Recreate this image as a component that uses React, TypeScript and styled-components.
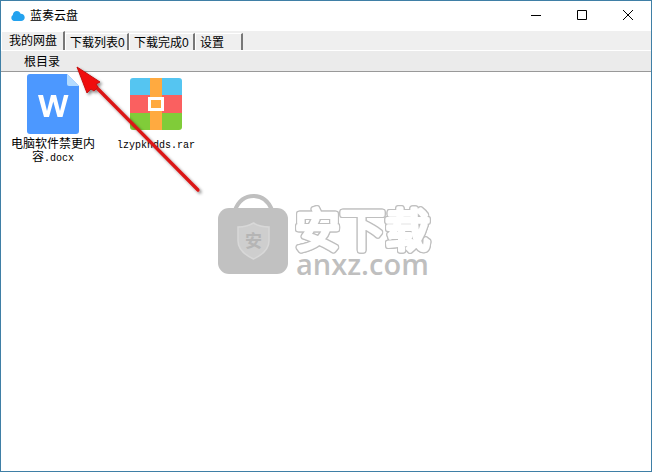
import React from 'react';
import styled, { createGlobalStyle } from 'styled-components';

const GlobalStyle = createGlobalStyle`
  *, *::before, *::after { box-sizing: border-box; }
  body {
    margin: 0;
    background: #fff;
    color: #000;
    font-family: "Liberation Sans", "Noto Sans CJK SC", sans-serif;
    font-size: 12px;
  }
  button {
    margin: 0;
    padding: 0;
    border: 0;
    background: none;
    color: inherit;
    font: inherit;
  }
`;

const Window = styled.div`
  display: flex;
  flex-direction: column;
  min-height: 100vh;
  border: 1px solid #3f7fa6;
  background: #fff;
`;

const TitleBar = styled.header`
  display: flex;
  align-items: center;
  height: 30px;
  padding-left: 9px;
  gap: 5px;
`;

const Title = styled.h1`
  flex: 1;
  margin: 0;
  font-size: 12px;
  font-weight: 400;
  line-height: 16px;
`;

const WindowButtons = styled.div`
  display: flex;
  align-self: stretch;
`;

const WindowButton = styled.button`
  display: grid;
  place-items: center;
  width: 46px;
  padding-bottom: 2px;
`;

const TabBar = styled.nav`
  display: flex;
  height: 20px;
  background: #efefef;
  border-bottom: 1px solid #fff;
`;

const Tab = styled.button<{ $active?: boolean; $width: number }>`
  width: ${(p) => p.$width}px;
  height: ${(p) => (p.$active ? 19 : 17)}px;
  align-self: flex-end;
  padding: 0 0 0 ${(p) => (p.$active ? 7 : 4)}px;
  border-top: 1px solid #fff;
  border-left: 1px solid #fff;
  border-right: 2px solid #777;
  background: #efefef;
  line-height: ${(p) => (p.$active ? 16 : 18)}px;
  text-align: left;
  white-space: nowrap;
`;

const PathBar = styled.div`
  display: flex;
  align-items: flex-end;
  height: 21px;
  padding: 0 0 1px 23px;
  background: #ebebeb;
  border-bottom: 1px solid #999;
  line-height: 16px;
`;

const Files = styled.main`
  position: relative;
  flex: 1;
  display: flex;
  align-items: flex-start;
  gap: 13px;
  padding: 2px 7px;
`;

const File = styled.button`
  display: flex;
  flex-direction: column;
  align-items: center;
  width: 90px;
  gap: 4px;
`;

const FileIcon = styled.span`
  display: grid;
  place-items: center;
  height: 60px;
`;

const FileName = styled.span`
  line-height: 13px;
  text-align: center;
  word-break: break-all;
`;

const Latin = styled.span`
  font-family: "Liberation Mono", monospace;
  font-size: 10px;
`;

const Arrow = styled.svg`
  position: absolute;
  left: 70px;
  top: -10px;
  pointer-events: none;
`;

const Watermark = styled.div`
  position: absolute;
  left: 216px;
  top: 122px;
  display: flex;
  gap: 2px;
  color: #bfbfbf;
  pointer-events: none;
`;

const Brand = styled.div`
  display: flex;
  flex-direction: column;
  padding-top: 6px;
`;

const BrandName = styled.svg`
  overflow: visible;
  filter: drop-shadow(1px 0 #bfbfbf) drop-shadow(-1px 0 #bfbfbf) drop-shadow(0 1px #bfbfbf) drop-shadow(0 -1px #bfbfbf);
`;

const BrandSite = styled.span`
  padding-left: 5px;
  font-family: "Open Sans", sans-serif;
  font-size: 29px;
  font-weight: 600;
  line-height: 20px;
`;

const CloudIcon = () => (
  <svg width="15" height="11" viewBox="0 0 15 11" aria-hidden="true">
    <path
      d="M3.7 10A3.4 3.4 0 0 1 2.800 3.900C3.100 1.500 4.800 0 6.800 0c1.900 0 3.300 1.100 3.800 2.800 2.400-.1 4.100 1.500 4.100 3.600s-1.600 3.600-3.600 3.600z"
      fill="#23a2ef"
    />
  </svg>
);

const DocIcon = () => (
  <svg width="52" height="60" viewBox="0 0 52 60" aria-hidden="true">
    <path d="M3 0h37l12 12v45a3 3 0 0 1-3 3H3a3 3 0 0 1-3-3V3a3 3 0 0 1 3-3z" fill="#4c98ff" />
    <path d="M40 0l12 12H42a2 2 0 0 1-2-2z" fill="#b5dcff" />
    <path
      d="M11 21h5l4 16 4-16h5l4 16 4-16h4.500l-6 22h-5l-4.200-15.500L22 43h-5z"
      fill="#fff"
    />
  </svg>
);

const ArchiveIcon = () => (
  <svg width="52" height="52" viewBox="0 0 52 52" aria-hidden="true">
    <path d="M0 17V3a3 3 0 0 1 3-3h46a3 3 0 0 1 3 3v14z" fill="#55c5f1" />
    <path d="M0 17h52v18H0z" fill="#fa6060" />
    <path d="M0 35h52v14a3 3 0 0 1-3 3H3a3 3 0 0 1-3-3z" fill="#80cc39" />
    <path d="M20 0h12v52H20z" fill="#ffaa40" />
    <path d="M19.500 20.500h13v11h-13z" fill="#ffaa40" stroke="#fff" strokeWidth="3" />
  </svg>
);

const BagLogo = () => (
  <svg width="72" height="82" viewBox="0 0 72 82" aria-hidden="true">
    <path d="M18 16C22 6 28 2 36.500 2S51 6 55 16" fill="none" stroke="#bfbfbf" strokeWidth="4" />
    <rect x="1" y="14" width="70" height="66" rx="11" fill="#c1c1c1" />
    <path
      d="M36.500 29c5 3 10 4 15.500 4v14c0 9-7 14-15.500 18C28 61 21 56 21 47V33c5.500 0 10.500-1 15.500-4z"
      fill="#cecece"
      stroke="#d8d8d8"
      strokeWidth="1.500"
    />
    <text x="36.500" y="53" textAnchor="middle" fontSize="17" fontWeight="700" fontFamily="Noto Sans CJK SC, sans-serif" fill="#b5b5b5">
      安
    </text>
  </svg>
);

const glyphs = {
  minimize: 'M1 6.500h10',
  maximize: 'M1.500 1.500h9v9h-9z',
  close: 'M1 1l10 10M11 1L1 11',
};

const Glyph = ({ d }: { d: string }) => (
  <svg width="12" height="12" viewBox="0 0 12 12" fill="none" stroke="#000" aria-hidden="true">
    <path d={d} />
  </svg>
);

const tabs = [
  { label: '我的网盘', width: 64 },
  { label: '下载列表0', width: 64 },
  { label: '下载完成0', width: 66 },
  { label: '设置', width: 48 },
];

export default function App() {
  return (
    <>
      <GlobalStyle />
      <Window>
        <TitleBar>
          <CloudIcon />
          <Title>蓝奏云盘</Title>
          <WindowButtons>
            <WindowButton aria-label="最小化"><Glyph d={glyphs.minimize} /></WindowButton>
            <WindowButton aria-label="最大化"><Glyph d={glyphs.maximize} /></WindowButton>
            <WindowButton aria-label="关闭"><Glyph d={glyphs.close} /></WindowButton>
          </WindowButtons>
        </TitleBar>
        <TabBar>
          {tabs.map((tab, i) => (
            <Tab key={tab.label} $active={i === 0} $width={tab.width}>{tab.label}</Tab>
          ))}
        </TabBar>
        <PathBar>根目录</PathBar>
        <Files>
          <File>
            <FileIcon><DocIcon /></FileIcon>
            <FileName>电脑软件禁更内容<Latin>.docx</Latin></FileName>
          </File>
          <File>
            <FileIcon><ArchiveIcon /></FileIcon>
            <FileName><Latin>lzypkhdds.rar</Latin></FileName>
          </File>
          <Watermark>
            <BagLogo />
            <Brand>
              <BrandName width="146" height="54" viewBox="0 0 146 54" role="img" aria-label="安下载">
                <text
                  x="4"
                  y="47"
                  fill="#fff"
                  stroke="#fff"
                  strokeWidth="4"
                  strokeLinejoin="round"
                  fontFamily="Noto Sans CJK SC, sans-serif"
                  fontSize="45"
                  fontWeight="400"
                >
                  安下载
                </text>
              </BrandName>
              <BrandSite>anxz.com</BrandSite>
            </Brand>
          </Watermark>
          <Arrow width="140" height="140" viewBox="0 0 140 140" aria-hidden="true">
            <defs>
              <filter id="arrow-shadow">
                <feDropShadow dx="2" dy="2" stdDeviation="1.500" floodColor="#000" floodOpacity="0.450" />
              </filter>
            </defs>
            <g filter="url(#arrow-shadow)">
              <path d="M25 25L127 128" stroke="#db1414" strokeWidth="3.200" strokeLinecap="round" />
              <path d="M6 5l23 15-4 2 2 3-4 4-3-2-4 4z" fill="#f00c0c" stroke="#c41212" strokeWidth="1" />
            </g>
          </Arrow>
        </Files>
      </Window>
    </>
  );
}
